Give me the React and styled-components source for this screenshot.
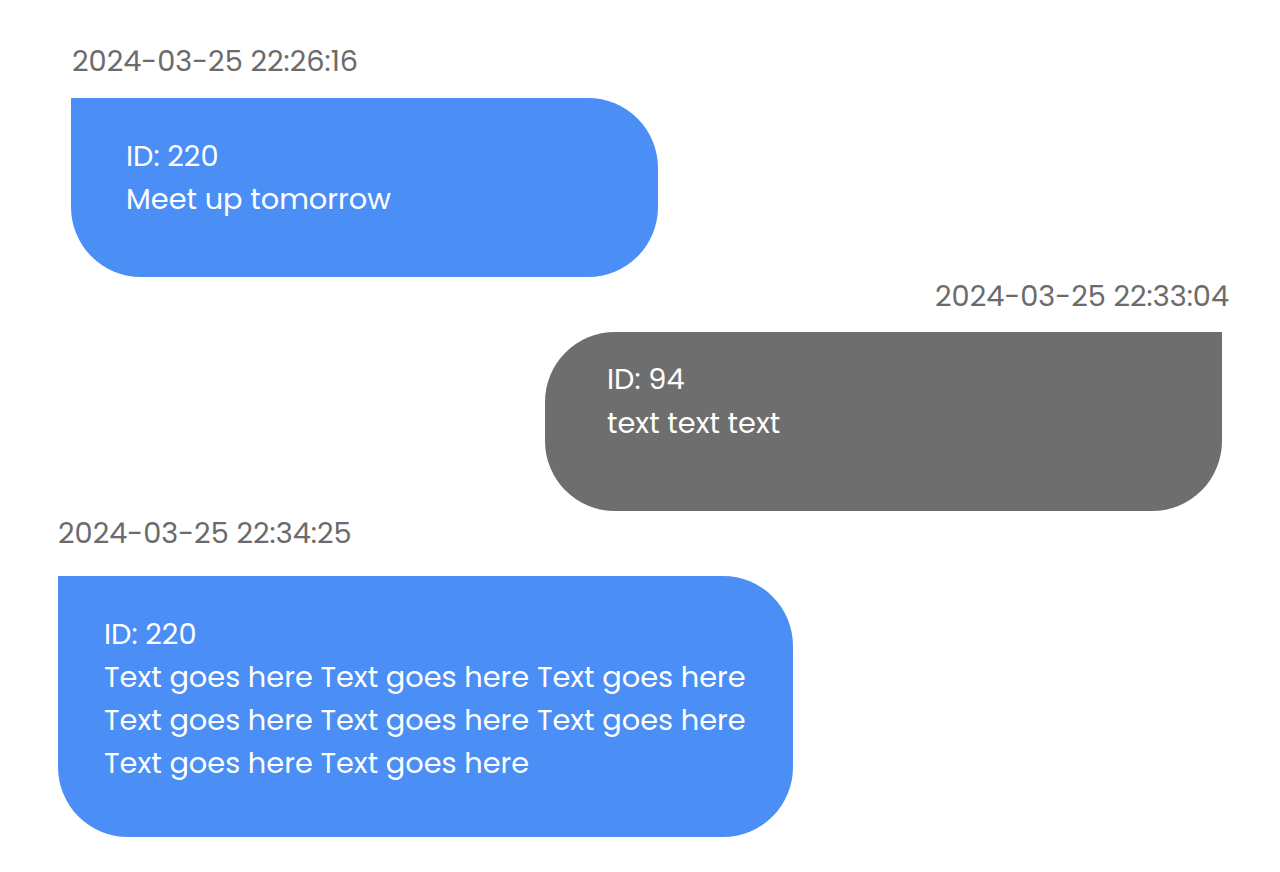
import React from 'react'
import styled, { createGlobalStyle } from 'styled-components'

const GlobalStyle = createGlobalStyle`
  body {
    margin: 0;
    background: #ffffff;
    font-family: Poppins, Inter, "Noto Sans", sans-serif;
  }
`

const Thread = styled.div`
  display: flex;
  flex-direction: column;
  padding: 40px 0 0;
  width: 1280px;
  box-sizing: border-box;
`

const Group = styled.div`
  display: flex;
  flex-direction: column;
  align-items: ${props => (props.mine ? 'flex-end' : 'flex-start')};
  margin-top: ${props => props.top}px;
  padding-left: ${props => props.left || 0}px;
  padding-right: ${props => props.right || 0}px;
`

const Stamp = styled.div`
  font-size: 28.8px;
  line-height: 1.5;
  color: #6b6b6b;
  margin-bottom: ${props => props.gap}px;
  padding-left: ${props => props.indent || 0}px;
  margin-right: ${props => (props.mine ? '-7px' : '0')};
`

const Bubble = styled.div`
  box-sizing: border-box;
  width: ${props => props.width}px;
  min-height: 179px;
  padding: ${props => props.pad};
  background: ${props => (props.mine ? '#6e6e6e' : '#4a8ef6')};
  border-radius: ${props => (props.mine ? '70px 0 70px 70px' : '0 70px 70px 70px')};
  color: #ffffff;
  font-size: 28.8px;
  line-height: 1.5;
`

const Line = styled.div`
  white-space: nowrap;
`

const messages = [
  {
    time: '2024-03-25 22:26:16',
    id: 220,
    lines: ['Meet up tomorrow'],
    width: 587,
    pad: '37px 20px 52px 55px',
    left: 71,
    indent: 1,
    top: 0,
    gap: 15
  },
  {
    time: '2024-03-25 22:33:04',
    id: 94,
    lines: ['text text text'],
    mine: true,
    width: 677,
    pad: '26px 20px 52px 62px',
    right: 58,
    top: -2,
    gap: 14
  },
  {
    time: '2024-03-25 22:34:25',
    id: 220,
    lines: [
      'Text goes here Text goes here Text goes here',
      'Text goes here Text goes here Text goes here',
      'Text goes here Text goes here'
    ],
    width: 735,
    pad: '37px 20px 52px 46px',
    left: 58,
    indent: 0,
    top: 1,
    gap: 20
  }
]

export default function App() {
  return (
    <>
      <GlobalStyle />
      <Thread>
        {messages.map((m, i) => (
          <Group key={i} mine={m.mine} left={m.left} right={m.right} top={m.top}>
            <Stamp mine={m.mine} gap={m.gap} indent={m.indent}>
              {m.time}
            </Stamp>
            <Bubble mine={m.mine} width={m.width} pad={m.pad}>
              <Line>ID: {m.id}</Line>
              {m.lines.map((l, j) => (
                <Line key={j}>{l}</Line>
              ))}
            </Bubble>
          </Group>
        ))}
      </Thread>
    </>
  )
}
